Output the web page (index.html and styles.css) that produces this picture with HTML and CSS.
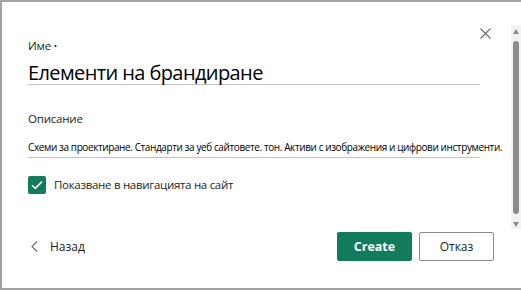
FILE: index.html
```html
<!DOCTYPE html>
<html lang="bg">
<head>
<meta charset="utf-8">
<link rel="stylesheet" href="styles.css">
</head>
<body>
<div class="dialog">
  <div class="main">
    <div class="close-row">
      <svg class="close" width="11" height="11" viewBox="0 0 11 11"><path d="M0.5 0.5 L10.5 10.5 M10.5 0.5 L0.5 10.5" stroke="#6b6b6b" stroke-width="1.1" fill="none"/></svg>
    </div>
    <div class="label">Име <span class="req">•</span></div>
    <div class="title-input">Елементи на брандиране</div>
    <div class="label desc-label">Описание</div>
    <div class="desc-input">Схеми за проектиране. Стандарти за уеб сайтовете. тон. Активи с изображения и цифрови инструменти.</div>
    <div class="check-row">
      <span class="checkbox">
        <svg width="12" height="10" viewBox="0 0 12 10"><path d="M1 5.2 L4.3 8.4 L11 1.6" stroke="#fff" stroke-width="1.5" fill="none"/></svg>
      </span>
      <span class="check-label">Показване в навигацията на сайт</span>
    </div>
    <div class="footer">
      <div class="back">
        <svg width="7" height="11" viewBox="0 0 7 11"><path d="M6 0.5 L1 5.5 L6 10.5" stroke="#6b6b6b" stroke-width="1.1" fill="none"/></svg>
        <span>Назад</span>
      </div>
      <div class="actions">
        <button class="btn primary">Create</button>
        <button class="btn secondary">Отказ</button>
      </div>
    </div>
  </div>
  <div class="scrollbar">
    <span class="arrow up"></span>
    <span class="thumb"></span>
    <span class="arrow down"></span>
  </div>
</div>
</body>
</html>
```
FILE: styles.css
```css
* { box-sizing: border-box; }
html, body { margin: 0; padding: 0; background: #fff; }
body { font-family: "Open Sans", "Noto Sans", sans-serif; color: #201f1e; }

.dialog {
  width: 521px;
  height: 290px;
  border: 2px solid #a3a3a3;
  border-right: none;
  display: flex;
  background: #fff;
}

.main {
  width: 509px;
  padding: 26px 0 0 26px;
  display: flex;
  flex-direction: column;
}

.close-row {
  width: 463px;
  height: 10px;
  display: flex;
  justify-content: flex-end;
}
.close { display: block; }

.label {
  font-size: 11.5px;
  line-height: 16px;
  height: 16px;
  letter-spacing: -0.2px;
  color: #201f1e;
}
.label .req { font-size: 9px; vertical-align: 1px; }

.title-input {
  width: 452px;
  margin-top: 7px;
  font-size: 20px;
  line-height: 24px;
  height: 24px;
  border-bottom: 1px solid #c2c2c2;
  letter-spacing: -0.6px;
  color: #000;
}

.desc-label { margin-top: 26px; }

.desc-input {
  width: 452px;
  margin-top: 13px;
  font-size: 10px;
  line-height: 15px;
  height: 18px;
  white-space: nowrap;
  overflow: visible;
  border-bottom: 1px solid #c2c2c2;
  letter-spacing: -0.4px;
  color: #000;
}

.check-row {
  margin-top: 18px;
  display: flex;
  align-items: center;
  height: 18px;
}
.checkbox {
  width: 18px;
  height: 18px;
  border-radius: 2px;
  background: #117b5c;
  display: flex;
  align-items: center;
  justify-content: center;
}
.checkbox svg { display: block; }
.check-label {
  margin-left: 8px;
  font-size: 11.5px;
  letter-spacing: -0.3px;
  line-height: 18px;
  color: #201f1e;
}

.footer {
  width: 466px;
  margin-top: 38px;
  display: flex;
  align-items: center;
  justify-content: space-between;
}
.back {
  display: flex;
  align-items: center;
  padding-left: 3px;
  font-size: 12px;
  color: #201f1e;
}
.back svg { display: block; }
.back span { margin-left: 12px; }

.actions { display: flex; gap: 7px; }
.btn {
  width: 75px;
  height: 29px;
  border-radius: 2px;
  font-family: "Open Sans", "Noto Sans", sans-serif;
  font-size: 12px;
  padding: 0;
  cursor: pointer;
}
.primary {
  background: #117b5c;
  border: 1px solid #117b5c;
  color: #fff;
  font-weight: 700;
  font-size: 12.5px;
}
.secondary {
  background: #fff;
  border: 1px solid #8a8a8a;
  color: #201f1e;
}

.scrollbar {
  width: 10px;
  margin-top: 23px;
  height: 204px;
  background: #f3f3f3;
  display: flex;
  flex-direction: column;
  align-items: center;
  padding: 4px 0 2px;
}
.arrow {
  width: 0;
  height: 0;
  border-left: 3.5px solid transparent;
  border-right: 3.5px solid transparent;
}
.arrow.up { border-bottom: 5px solid #8c8c8c; }
.arrow.down { border-top: 5px solid #8c8c8c; }
.thumb {
  width: 6px;
  margin: 7px 0 8px;
  flex: 1;
  background: #8c8c8c;
  border-radius: 3px;
}
```
